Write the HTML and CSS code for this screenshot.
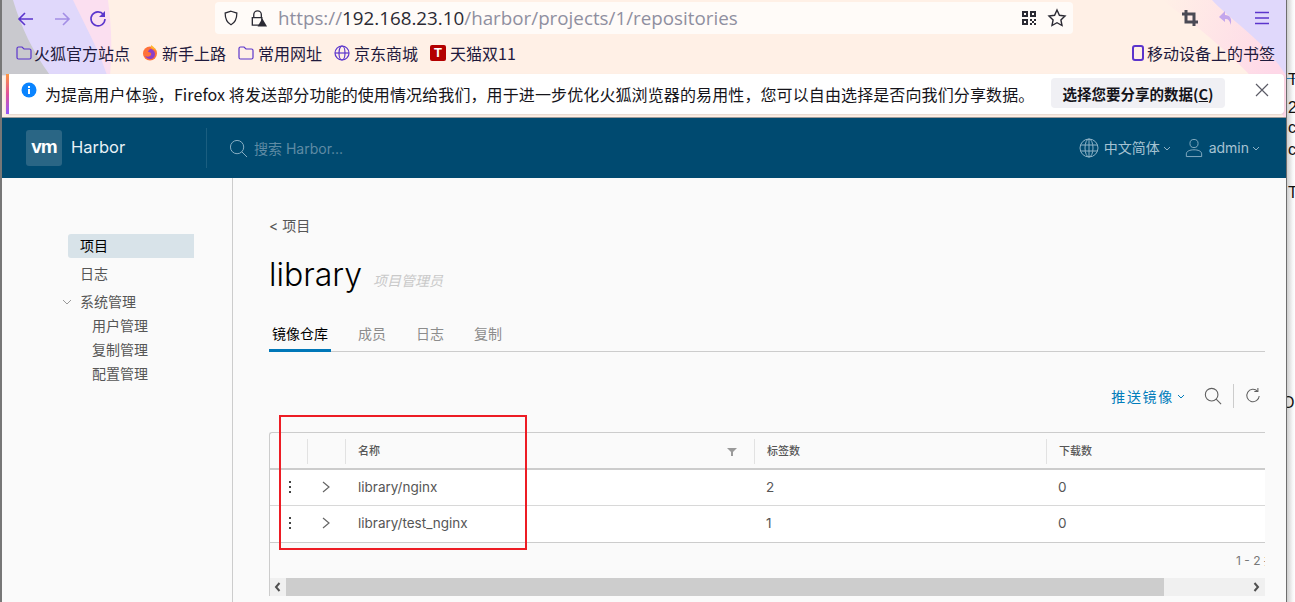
FILE: index.html
```html
<!DOCTYPE html>
<html lang="zh-CN">
<head>
<meta charset="utf-8">
<title>Harbor</title>
<link rel="stylesheet" href="styles.css">
</head>
<body>
<div class="screen">
  <div class="window">
    <div class="chrome">
      <svg class="theme" viewBox="0 0 1284 118" preserveAspectRatio="none" aria-hidden="true">
        <defs>
          <linearGradient id="rosy" x1="0" y1="0" x2="1" y2="0.3">
            <stop offset="0" stop-color="#fff0e6"/>
            <stop offset="1" stop-color="#fed8e8"/>
          </linearGradient>
        </defs>
        <path d="M0 0H106C110 30 110 55 108 76H0Z" fill="#fbdff0"/>
        <path d="M0 0H71C84 28 96 48 105 76H0Z" fill="#e0d8fb"/>
        <path d="M0 0H11C20 30 30 50 48 76H0Z" fill="#c9c9ce"/>
        <path d="M1160 0H1284V118H1282C1250 70 1200 30 1160 0Z" fill="url(#rosy)"/>
        <path d="M1210 0H1284V76C1262 40 1228 20 1210 0Z" fill="#e0d8fb"/>
      </svg>

      <div class="toolbar">
        <div class="nav">
          <svg class="ico" viewBox="0 0 20 20"><path d="M17 10H3M9 4l-6 6 6 6" class="st-violet"/></svg>
          <svg class="ico faded" viewBox="0 0 20 20"><path d="M3 10h14M11 4l6 6-6 6" class="st-violet"/></svg>
          <svg class="ico" viewBox="0 0 20 20"><path d="M15.5 5.5A7 7 0 1 0 17 10" class="st-violet"/><path d="M17 2v6h-6z" fill="#5b35cc"/></svg>
        </div>
        <div class="urlbar">
          <svg class="ico shield" viewBox="0 0 20 20"><path d="M10 2.500l6.500 2c0 6-1.500 10.500-6.500 13-5-2.500-6.500-7-6.500-13z" class="st-ink"/></svg>
          <svg class="ico lock" viewBox="0 0 20 20"><path d="M5 9V6a4 4 0 0 1 8 0v3M3.500 9h10v8h-10z" class="st-ink"/><path d="M14 10l5 8.500H9z" fill="#2b2a33"/></svg>
          <span class="url"><span class="url-dim">https://</span>192.168.23.10<span class="url-dim">/harbor/projects/1/repositories</span></span>
          <svg class="ico qr" viewBox="0 0 16 16"><path d="M1 1h6v6H1zM9 1h6v6H9zM1 9h6v6H1zM3 3v2h2V3zM11 3v2h2V3zM3 11v2h2v-2zM9 9h2v2H9zM13 9h2v2h-2zM11 11h2v2h-2zM9 13h2v2H9zM13 13h2v2h-2z" fill="#2b2a33" fill-rule="evenodd"/></svg>
          <svg class="ico star" viewBox="0 0 20 20"><path d="M10 2l2.400 5.300 5.600.7-4.100 3.900 1.100 5.600-5-2.800-5 2.800 1.100-5.600L2 8l5.600-.7z" class="st-ink"/></svg>
        </div>
        <div class="tools">
          <svg class="ico" viewBox="0 0 20 20"><path d="M6 2v12h12M2 6h12v12" fill="none" stroke="#4a4a55" stroke-width="3"/></svg>
          <svg class="ico" viewBox="0 0 20 20"><path d="M9 3L3 9l6 5v-3c3 0 5 1 5.500 6 2-6-.5-10-5.500-10z" fill="#c3a6ec"/></svg>
          <svg class="ico" viewBox="0 0 20 20"><path d="M3 4.500h14M3 10h14M3 15.500h14" fill="none" stroke="#5b35cc" stroke-width="1.600"/></svg>
        </div>
      </div>

      <div class="bookmarks">
        <span class="mark first"><svg class="folder" viewBox="0 0 16 14"><path d="M1 2.500A1.500 1.500 0 0 1 2.500 1h3.500l2 2h5.500A1.500 1.500 0 0 1 15 4.500v7a1.500 1.500 0 0 1-1.500 1.500h-11A1.500 1.500 0 0 1 1 11.500z" class="st-thin"/></svg>火狐官方站点</span>
        <span class="mark"><svg class="fav" viewBox="0 0 16 16"><circle cx="8" cy="8.500" r="7" fill="#ff7139"/><path d="M8 4a5 5 0 0 1 5 5c0 3-2 5-5 5-2 0-4-1-5-3 2 1 5 1 6-1 1-2-1-3-3-3 0-1 1-2 2-3z" fill="#8b3fc9"/><path d="M9 0c3 2 5 4 6 7-2-3-4-3-6-4z" fill="#ffb52e"/></svg>新手上路</span>
        <span class="mark"><svg class="folder" viewBox="0 0 16 14"><path d="M1 2.500A1.500 1.500 0 0 1 2.500 1h3.500l2 2h5.500A1.500 1.500 0 0 1 15 4.500v7a1.500 1.500 0 0 1-1.500 1.500h-11A1.500 1.500 0 0 1 1 11.500z" class="st-thin"/></svg>常用网址</span>
        <span class="mark"><svg class="fav" viewBox="0 0 16 16"><circle cx="8" cy="8" r="7" class="st-thin"/><ellipse cx="8" cy="8" rx="3" ry="7" class="st-thin"/><path d="M1 8h14" class="st-thin"/></svg>京东商城</span>
        <span class="mark"><span class="tmall">T</span>天猫双11</span>
        <span class="mark mobile"><svg class="phone" viewBox="0 0 12 16"><rect x="1" y="1" width="10" height="14" rx="2" fill="none" stroke="#5b35cc" stroke-width="2"/></svg>移动设备上的书签</span>
      </div>

      <div class="notice">
        <svg class="info" viewBox="0 0 16 16"><circle cx="8" cy="8" r="7.500" fill="#0a84ff"/><rect x="7" y="7" width="2" height="5" fill="#fff"/><rect x="7" y="4" width="2" height="2" fill="#fff"/></svg>
        <span class="notice-text">为提高用户体验，Firefox 将发送部分功能的使用情况给我们，用于进一步优化火狐浏览器的易用性，您可以自由选择是否向我们分享数据。</span>
        <button class="notice-btn">选择您要分享的数据(<u>C</u>)</button>
        <svg class="notice-close" viewBox="0 0 14 14"><path d="M1 1l12 12M13 1L1 13" fill="none" stroke="#5b5b66" stroke-width="1.200"/></svg>
      </div>
    </div>

    <header class="hb-head">
      <div class="brand">
        <span class="vm">vm</span>
        <span class="brand-name">Harbor</span>
      </div>
      <div class="search">
        <svg class="hd-ico" viewBox="0 0 20 20"><circle cx="8.500" cy="8.500" r="7" class="st-head"/><path d="M13.500 13.500l5.500 5.500" class="st-head"/></svg>
        <span>搜索 Harbor...</span>
      </div>
      <div class="hd-right">
        <svg class="globe" viewBox="0 0 20 20"><circle cx="10" cy="10" r="9" class="st-head"/><ellipse cx="10" cy="10" rx="4" ry="9" class="st-head"/><path d="M10 1v18M1.500 7h17M1.500 13h17" class="st-head"/></svg>
        <span class="hd-label">中文简体</span>
        <svg class="caret" viewBox="0 0 8 5"><path d="M1 1l3 3 3-3" class="st-head"/></svg>
        <svg class="user" viewBox="0 0 20 22"><circle cx="10" cy="6" r="4.500" class="st-head"/><path d="M1.500 20.500v-3c0-3 4-4.500 8.500-4.500s8.500 1.500 8.500 4.500v3z" class="st-head"/></svg>
        <span class="hd-label">admin</span>
        <svg class="caret" viewBox="0 0 8 5"><path d="M1 1l3 3 3-3" class="st-head"/></svg>
      </div>
    </header>

    <div class="body">
      <nav class="side">
        <a class="side-item selected">项目</a>
        <a class="side-item">日志</a>
        <a class="side-item group"><svg class="group-caret" viewBox="0 0 10 6"><path d="M1 1l4 4 4-4" fill="none" stroke="#9a9a9a"/></svg>系统管理</a>
        <a class="side-sub">用户管理</a>
        <a class="side-sub">复制管理</a>
        <a class="side-sub">配置管理</a>
      </nav>

      <main class="content">
        <div class="crumb">&lt; 项目</div>
        <div class="title-row">
          <h1>library</h1>
          <span class="role">项目管理员</span>
        </div>
        <div class="tabs">
          <span class="tab active">镜像仓库</span>
          <span class="tab">成员</span>
          <span class="tab">日志</span>
          <span class="tab">复制</span>
        </div>
        <div class="actions">
          <span class="push">推送镜像</span>
          <svg class="push-caret" viewBox="0 0 8 5"><path d="M1 1l3 3 3-3" fill="none" stroke="#007cbb"/></svg>
          <svg class="act-search" viewBox="0 0 20 20"><circle cx="8.500" cy="8.500" r="7" class="st-act"/><path d="M13.500 13.500l5.500 5.500" class="st-act"/></svg>
          <span class="act-sep"></span>
          <svg class="act-refresh" viewBox="0 0 18 18"><path d="M14 3.500A7 7 0 1 0 16 9" class="st-act"/><path d="M10.500 4h4V0" class="st-act"/></svg>
        </div>

        <div class="grid-wrap">
          <div class="grid-row grid-head">
            <span class="cell"></span>
            <span class="cell sep"></span>
            <span class="cell sep name-head">名称
              <svg class="filter" viewBox="0 0 10 8"><path d="M0 0h10L6 4v4H4V4z" fill="#9a9a9a"/></svg>
            </span>
            <span class="cell sep">标签数</span>
            <span class="cell sep">下载数</span>
          </div>
          <div class="grid-row grid-body">
            <span class="cell"><svg class="dots" viewBox="0 0 4 14"><path d="M1 1h2v2H1zM1 6h2v2H1zM1 11h2v2H1z" fill="#444"/></svg></span>
            <span class="cell"><svg class="expand" viewBox="0 0 8 12"><path d="M1 1l6 5-6 5" fill="none" stroke="#666" stroke-width="1.200"/></svg></span>
            <span class="cell name-cell">library/nginx</span>
            <span class="cell">2</span>
            <span class="cell">0</span>
          </div>
          <div class="grid-row grid-body">
            <span class="cell"><svg class="dots" viewBox="0 0 4 14"><path d="M1 1h2v2H1zM1 6h2v2H1zM1 11h2v2H1z" fill="#444"/></svg></span>
            <span class="cell"><svg class="expand" viewBox="0 0 8 12"><path d="M1 1l6 5-6 5" fill="none" stroke="#666" stroke-width="1.200"/></svg></span>
            <span class="cell name-cell">library/test_nginx</span>
            <span class="cell">1</span>
            <span class="cell">0</span>
          </div>
          <div class="grid-foot">1 - 2 共</div>
          <div class="scrollbar">
            <span class="sb-btn"><svg viewBox="0 0 7 10"><path d="M5.500 1L2 5l3.500 4" fill="none" stroke="#505050" stroke-width="2"/></svg></span>
            <span class="sb-thumb"></span>
            <span class="sb-track"></span>
            <span class="sb-btn"><svg viewBox="0 0 7 10"><path d="M1.500 1L5 5 1.500 9" fill="none" stroke="#505050" stroke-width="2"/></svg></span>
          </div>
        </div>
      </main>
    </div>
  </div>

  <aside class="behind">
    <span class="peek peek-rule"></span>
    <span class="peek peek-a">T</span>
    <span class="peek peek-b">2</span>
    <span class="peek peek-c">c</span>
    <span class="peek peek-d">c</span>
    <span class="peek peek-e">T</span>
    <span class="peek peek-f">Ok</span>
  </aside>

  <div class="callout"></div>
</div>
</body>
</html>
```
FILE: styles.css
```css
* { box-sizing: border-box; }

html, body {
  margin: 0;
  padding: 0;
  background: #fff;
}

.screen {
  position: relative;
  display: flex;
  width: 1295px;
  height: 602px;
  overflow: hidden;
  font-family: "Noto Sans CJK SC", "Noto Sans", sans-serif;
}

.window {
  display: flex;
  flex-direction: column;
  width: 1287px;
  height: 602px;
  border-left: 2px solid #777;
  border-right: 1px solid #6e6e6e;
}

/* Browser frame */
.chrome {
  position: relative;
  height: 118px;
  flex: none;
  display: flex;
  flex-direction: column;
  background: #fff0e6;
  border-bottom: 1px solid #9a9a9a;
}

.theme {
  position: absolute;
  inset: 0;
  width: 100%;
  height: 100%;
}

.ico { width: 20px; height: 20px; flex: none; display: block; }
.faded { opacity: .45; }
.st-violet { fill: none; stroke: #5b35cc; stroke-width: 1.600; }
.st-ink { fill: none; stroke: #2b2a33; stroke-width: 1.400; }
.st-thin { fill: none; stroke: #5b35cc; stroke-width: 1.200; }

.toolbar {
  position: relative;
  display: flex;
  align-items: center;
  height: 36px;
  flex: none;
}

.nav {
  display: flex;
  gap: 16px;
  width: 213px;
  padding-left: 14px;
  margin-top: 1px;
}

.urlbar {
  display: flex;
  align-items: center;
  width: 858px;
  height: 32px;
  padding: 0 6px 0 7px;
  background: #fffbf8;
  border-radius: 4px;
}

.shield { width: 18px; height: 18px; }
.lock { width: 19px; height: 19px; margin-left: 9px; }

.url {
  margin-left: 10px;
  flex: 1;
  font-family: "Open Sans", sans-serif;
  font-size: 18.800px;
  color: #2b2a33;
  white-space: nowrap;
}

.url-dim { color: #8f8fa0; }

.qr { width: 16px; height: 16px; }
.star { margin-left: 10px; }

.tools {
  display: flex;
  gap: 16px;
  margin-left: 107px;
}

.bookmarks {
  position: relative;
  display: flex;
  align-items: center;
  height: 28px;
  flex: none;
  margin-top: 3px;
  padding-left: 14px;
  padding-right: 11px;
  font-size: 16px;
  color: #1f1a3d;
}

.mark {
  display: flex;
  align-items: center;
  gap: 4px;
  margin-right: 12px;
  white-space: nowrap;
}

.first { gap: 2px; }

.folder { width: 16px; height: 14px; }
.fav { width: 16px; height: 16px; }
.phone { width: 12px; height: 16px; }

.tmall {
  display: block;
  width: 16px;
  height: 16px;
  background: #b30000;
  border-radius: 2px;
  color: #fff;
  font: bold 13px/16px "Liberation Sans", sans-serif;
  text-align: center;
}

.mobile { margin-left: auto; margin-right: 0; gap: 3px; }

.notice {
  position: relative;
  display: flex;
  align-items: flex-start;
  flex: none;
  margin: 7px 2px 0 4px;
  height: 40px;
  background: #fff;
  border-radius: 4px;
  border-left: 3px solid;
  border-image: linear-gradient(#ff9a3c, #e0509a, #9059ff) 1;
  box-shadow: 0 1px 2px rgba(0, 0, 0, .12);
}

.info { width: 16px; height: 16px; margin: 8px 0 0 12px; flex: none; }

.notice-text {
  margin: 9px 0 0 8px;
  width: 1006px;
  flex: none;
  font-size: 16px;
  letter-spacing: .11px;
  line-height: 22px;
  color: #15141a;
  white-space: nowrap;
}

.notice-btn {
  margin: 4px 0 0 0;
  width: 174px;
  height: 30px;
  flex: none;
  border: 0;
  border-radius: 4px;
  background: #f0f0f4;
  font-family: inherit;
  font-size: 14.500px;
  font-weight: 600;
  color: #15141a;
  white-space: nowrap;
  padding: 0;
}

.notice-close { width: 14px; height: 14px; margin: 9px 0 0 30px; flex: none; }

/* Harbor header */
.hb-head {
  display: flex;
  align-items: center;
  flex: none;
  height: 60px;
  background: #004a70;
  color: #fafafa;
}

.brand {
  display: flex;
  align-items: center;
  width: 205px;
  height: 40px;
  padding-left: 24px;
  border-right: 1px solid #1b5e80;
}

.vm {
  width: 36px;
  height: 36px;
  background: #2a6685;
  border-radius: 3px;
  color: #fff;
  font: bold 19px/34px "Liberation Sans", sans-serif;
  letter-spacing: -1px;
  text-align: center;
}

.brand-name {
  margin-left: 9px;
  padding-bottom: 2px;
  font-family: Inter, sans-serif;
  font-size: 16.500px;
  color: #e8f1f6;
}

.search {
  display: flex;
  align-items: center;
  gap: 6px;
  padding-left: 22px;
  font-family: Inter, "Noto Sans CJK SC", sans-serif;
  font-size: 14px;
  color: #5f8ba4;
}

.hd-ico { width: 19px; height: 19px; }
.st-head { fill: none; stroke: #8fb3c7; stroke-width: 1; }

.hd-right {
  display: flex;
  align-items: center;
  margin-left: auto;
  padding-right: 26px;
  font-family: Inter, "Noto Sans CJK SC", sans-serif;
  font-size: 14px;
  color: #a6c3d3;
}

.hd-label { padding-bottom: 2px; }
.globe { width: 20px; height: 20px; margin-right: 5px; }
.user { width: 18px; height: 20px; margin-right: 6px; }
.caret { width: 8px; height: 5px; margin: 1px 0 0 3px; }
.caret + .user { margin-left: 14px; }

/* Page body */
.body {
  flex: 1;
  display: flex;
  min-height: 0;
  background: #fafafa;
}

.side {
  width: 231px;
  flex: none;
  padding: 56px 0 0 66px;
  border-right: 1px solid #ccc;
  display: flex;
  flex-direction: column;
  font-size: 14px;
  color: #565656;
}

.side-item {
  display: block;
  position: relative;
  width: 126px;
  height: 24px;
  line-height: 22px;
  padding-left: 12px;
  margin-bottom: 4px;
}

.selected {
  background: #d8e3e9;
  border-radius: 3px 0 0 3px;
  color: #000;
}

.group { margin-bottom: 0; }

.group-caret {
  position: absolute;
  left: -6px;
  top: 9px;
  width: 10px;
  height: 6px;
}

.side-sub {
  display: block;
  height: 24px;
  line-height: 22px;
  padding-left: 24px;
}

.content {
  flex: 1;
  min-width: 0;
  padding: 38px 21px 0 36px;
}

.crumb {
  height: 20px;
  line-height: 20px;
  font-family: Inter, "Noto Sans CJK SC", sans-serif;
  font-size: 14px;
  color: #565656;
}

.title-row {
  display: flex;
  align-items: baseline;
  gap: 11px;
  height: 43px;
  margin-top: 17px;
}

h1 {
  margin: 0;
  font-family: Inter, sans-serif;
  font-size: 32px;
  font-weight: 300;
  line-height: 44px;
  color: #000;
}

.role {
  font-size: 14px;
  font-style: italic;
  color: #c9c9c9;
}

.tabs {
  display: flex;
  height: 34px;
  margin-top: 22px;
  border-bottom: 1px solid #ccc;
  font-size: 14px;
  color: #8c8c8c;
}

.tab {
  height: 34px;
  line-height: 30px;
  padding: 0 3px;
  margin-right: 24px;
}

.active {
  color: #000;
  border-bottom: 3px solid #0077b8;
}

.actions {
  display: flex;
  align-items: center;
  justify-content: flex-end;
  height: 24px;
  margin-top: 32px;
}

.push { font-size: 14px; letter-spacing: 1.700px; color: #007cbb; }
.push-caret { width: 8px; height: 5px; margin-left: 3px; }
.st-act { fill: none; stroke: #5f5f5f; stroke-width: 1.200; }
.act-search { width: 18px; height: 18px; margin-left: 19px; }
.act-sep { width: 1px; height: 24px; margin-left: 11px; background: #ccc; }
.act-refresh { width: 16px; height: 16px; margin-left: 11px; margin-right: 4px; }

/* Repository table */
.grid-wrap {
  margin-top: 24px;
  border-top: 1px solid #ccc;
  border-left: 1px solid #ccc;
  border-top-left-radius: 3px;
  overflow: hidden;
}

.grid-row {
  display: grid;
  grid-template-columns: 37px 38px 409px 292px 1fr;
  font-family: Inter, "Noto Sans CJK SC", sans-serif;
  align-items: center;
}

.grid-head {
  height: 37px;
  border-bottom: 2px solid #ccc;
  font-size: 11px;
  font-weight: 500;
  color: #565656;
}

.grid-body {
  height: 36px;
  background: #fff;
  border-bottom: 1px solid #d8d8d8;
  font-size: 13.500px;
  color: #565656;
}

.grid-body + .grid-body { height: 37px; border-bottom-color: #ccc; }

.cell {
  padding-left: 12px;
  white-space: nowrap;
}

.grid-body .cell { padding-bottom: 2px; }
.grid-body .name-cell { padding-left: 13px; }
.grid-head .cell { height: 25px; line-height: 25px; margin-top: 1px; }
.sep { border-left: 1px solid #e2e2e2; }
.name-head { position: relative; }

.filter {
  position: absolute;
  right: 17px;
  top: 9px;
  width: 10px;
  height: 8px;
}

.dots { display: block; width: 4px; height: 14px; margin: 0 0 0 6px; }
.grid-body .cell:nth-child(2) { padding-left: 15px; }
.expand { display: block; width: 8px; height: 12px; }

.grid-foot {
  height: 35px;
  padding: 10px 0 0 966px;
  font-family: Inter, "Noto Sans CJK SC", sans-serif;
  font-size: 12px;
  line-height: 16px;
  color: #777;
  white-space: nowrap;
  overflow: hidden;
}

.scrollbar {
  display: flex;
  height: 18px;
  margin-left: -1px;
  background: #f0f0f0;
}

.sb-btn {
  display: flex;
  align-items: center;
  justify-content: center;
  width: 17px;
  flex: none;
}

.sb-btn svg { width: 7px; height: 10px; }
.sb-thumb { width: 878px; flex: none; background: #cdcdcd; }
.sb-track { flex: 1; }

/* Neighbouring window behind the browser */
.behind {
  position: relative;
  flex: 1;
  background: linear-gradient(90deg, #cfcfcf, #f6f6f6 70%, #fff);
  font: 16px/18px "Liberation Sans", sans-serif;
  color: #111;
  overflow: hidden;
}

.peek { position: absolute; left: 1px; }
.peek-rule { left: 0; right: 0; top: 78px; height: 1px; background: #2a7fb8; }
.peek-a { top: 71px; }
.peek-b { top: 99px; }
.peek-c { top: 119px; }
.peek-d { top: 141px; }
.peek-e { top: 184px; }
.peek-f { top: 394px; left: -5px; }

/* Red annotation drawn on top of the page */
.callout {
  position: absolute;
  left: 279px;
  top: 415px;
  width: 248px;
  height: 135px;
  border: 2px solid #ed1c24;
  pointer-events: none;
}
```
